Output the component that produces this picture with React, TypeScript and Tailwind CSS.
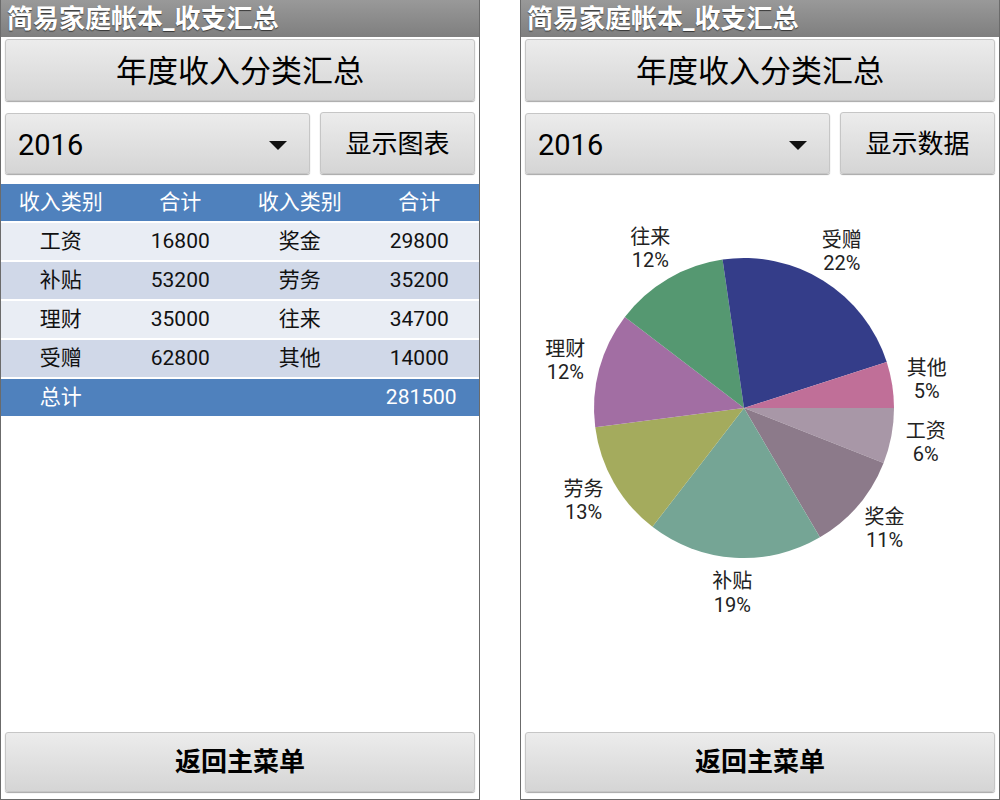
import React from "react";

const FONT = { fontFamily: 'Roboto, "Noto Sans CJK SC", sans-serif' };

const rows = [
  ["工资", "16800", "奖金", "29800"],
  ["补贴", "53200", "劳务", "35200"],
  ["理财", "35000", "往来", "34700"],
  ["受赠", "62800", "其他", "14000"],
];

// pie order as drawn, clockwise from 3 o'clock
const slices = [
  { name: "工资", value: 16800, color: "#a897a7" },
  { name: "奖金", value: 29800, color: "#8c7a8a" },
  { name: "补贴", value: 53200, color: "#75a595" },
  { name: "劳务", value: 35200, color: "#a4ab5d" },
  { name: "理财", value: 35000, color: "#a26ea3" },
  { name: "往来", value: 34700, color: "#559871" },
  { name: "受赠", value: 62800, color: "#343d89" },
  { name: "其他", value: 14000, color: "#c06f98" },
];

function GrayButton({ label, className, textClass }: { label: string; className: string; textClass: string }) {
  return (
    <div
      className={`flex items-center justify-center rounded-[3px] border border-[#c6c6c6] bg-gradient-to-b from-[#ececec] to-[#d5d5d5] shadow-[0_1px_1px_rgba(0,0,0,0.35)] text-black ${className}`}
    >
      <span className={textClass}>{label}</span>
    </div>
  );
}

function TitleBar() {
  return (
    <div className="h-[37px] bg-gradient-to-b from-[#999999] to-[#7f7f7f] flex items-center pl-[6px] pt-[1px]">
      <span className="text-white text-[26px] font-bold leading-none [text-shadow:0_1px_1px_rgba(0,0,0,0.6)]">
        简易家庭帐本_收支汇总
      </span>
    </div>
  );
}

function Controls({ action }: { action: string }) {
  return (
    <>
      <GrayButton label="年度收入分类汇总" className="mt-[2px] mx-[4px] h-[62px] pt-[4px]" textClass="text-[31px]" />
      <div className="flex mt-[11px] mx-[4px] gap-[10px] items-center">
        <div className="w-[305px] h-[61px] flex items-center justify-between pl-[12px] pr-[22px] pt-[5px] rounded-[3px] border border-[#c6c6c6] bg-gradient-to-b from-[#ececec] to-[#d5d5d5] shadow-[0_1px_1px_rgba(0,0,0,0.35)]">
          <span className="text-[29px] text-black">2016</span>
          <svg width="18" height="9" viewBox="0 0 18 9" className="-mt-[1px]">
            <polygon points="0,0 18,0 9,9" fill="#111" />
          </svg>
        </div>
        <GrayButton label={action} className="flex-1 h-[62px] pt-[3px]" textClass="text-[26px]" />
      </div>
    </>
  );
}

function DataTable() {
  return (
    <div className="mt-[10px] text-center">
      <div className="grid grid-cols-4 h-[37px] items-center bg-[#4f81bd] text-white text-[21px]">
        <span>收入类别</span>
        <span>合计</span>
        <span>收入类别</span>
        <span>合计</span>
      </div>
      {rows.map((r, i) => (
        <div
          key={i}
          className={`grid grid-cols-4 h-[37px] mt-[2px] items-center text-[21px] text-[#111] ${
            i % 2 === 0 ? "bg-[#e9edf4]" : "bg-[#d0d8e8]"
          }`}
        >
          {r.map((c, j) => (
            <span key={j}>{c}</span>
          ))}
        </div>
      ))}
      <div className="grid grid-cols-4 h-[37px] mt-[2px] items-center bg-[#4f81bd] text-white text-[21px]">
        <span>总计</span>
        <span />
        <span />
        <span className="pl-[4px]">281500</span>
      </div>
    </div>
  );
}

function PieChart() {
  const cx = 223;
  const cy = 224;
  const r = 150;
  const total = slices.reduce((s, x) => s + x.value, 0);
  let acc = 0;
  return (
    <svg width="478" height="450" className="mt-[10px]">
      {slices.map((s) => {
        const a0 = (acc / total) * Math.PI * 2;
        acc += s.value;
        const a1 = (acc / total) * Math.PI * 2;
        const x0 = cx + r * Math.cos(a0);
        const y0 = cy + r * Math.sin(a0);
        const x1 = cx + r * Math.cos(a1);
        const y1 = cy + r * Math.sin(a1);
        const large = a1 - a0 > Math.PI ? 1 : 0;
        const mid = (a0 + a1) / 2;
        const lx = cx + 185 * Math.cos(mid);
        const ly = cy + 185 * Math.sin(mid);
        const pct = Math.round((s.value / total) * 100);
        return (
          <g key={s.name}>
            <path
              d={`M${cx},${cy} L${x0},${y0} A${r},${r} 0 ${large} 1 ${x1},${y1} Z`}
              fill={s.color}
            />
            <text
              x={lx}
              y={ly - 11.5}
              textAnchor="middle"
              dominantBaseline="central"
              fontSize="20"
              fill="#222"
              style={FONT}
            >
              {s.name}
            </text>
            <text
              x={lx}
              y={ly + 12}
              textAnchor="middle"
              dominantBaseline="central"
              fontSize="20"
              fill="#222"
              style={FONT}
            >
              {pct}%
            </text>
          </g>
        );
      })}
    </svg>
  );
}

function Screen({ action, children }: { action: string; children: React.ReactNode }) {
  return (
    <div className="w-[480px] h-[800px] flex flex-col border-x border-b border-[#6b6b6b] bg-white">
      <TitleBar />
      <Controls action={action} />
      {children}
      <div className="flex-1" />
      <GrayButton label="返回主菜单" className="mx-[4px] mb-[7px] h-[60px] pt-[1px]" textClass="text-[26px] font-bold" />
    </div>
  );
}

export default function App() {
  return (
    <div className="w-[1000px] h-[800px] bg-white flex justify-between" style={FONT}>
      <Screen action="显示图表">
        <DataTable />
      </Screen>
      <Screen action="显示数据">
        <PieChart />
      </Screen>
    </div>
  );
}
